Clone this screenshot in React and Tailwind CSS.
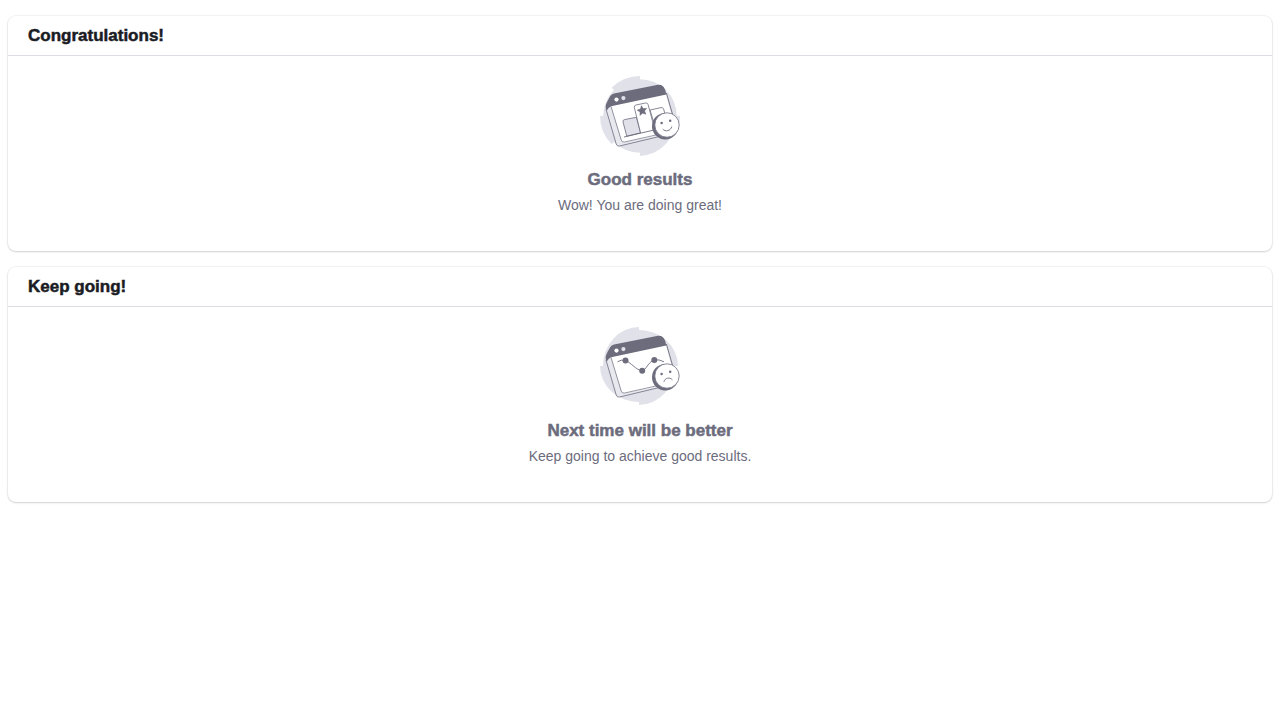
function BrowserFrame() {
  return (
    <>
      <path d="M6 33 L16.2 68 Q17 70.6 19.6 70 L58 60.8 L70 41 L66 17 Z" fill="#e8e8ef" />
      <path d="M6 33 L16.2 68 Q17 70.6 19.6 70 L58 60.8" fill="none" stroke="#6c6c7d" strokeWidth="0.8" />
      <path d="M11 30 L65.8 18 L72.5 42 L56 60 L24.5 66.2 Q22.3 66.6 21.6 64.4 Z" fill="#fff" />
      <path d="M11 30.4 L21.2 64 Q22 66.6 24.6 66 L56 59" fill="none" stroke="#6c6c7d" strokeWidth="0.7" />
      <path d="M66.4 17 L73 40" fill="none" stroke="#6c6c7d" strokeWidth="0.9" />
      <path d="M6.8 34.5 C4.8 31 5.8 28.3 7.4 25.2 L10.3 20 Q11.5 18 14 17.4 L58 8.8 Q65 8 66.3 18.5 L11 30.2 Q8.7 31 6.8 34.5 Z" fill="#6c6c7d" />
      <circle cx="16.5" cy="23.6" r="2.1" fill="#fff" />
      <circle cx="23.4" cy="22.1" r="2.1" fill="#e1e1ea" />
    </>
  );
}

function Face({ mouth }) {
  return (
    <>
      <circle cx="65.2" cy="50.2" r="13.2" fill="#6c6c7d" />
      <circle cx="67" cy="49" r="12.2" fill="#fff" stroke="#6c6c7d" strokeWidth="0.8" />
      <circle cx="61.6" cy="47" r="1.25" fill="#6c6c7d" />
      <circle cx="70.2" cy="44.7" r="1.25" fill="#6c6c7d" />
      <path d={mouth} fill="none" stroke="#6c6c7d" strokeWidth="0.9" strokeLinecap="round" />
    </>
  );
}

function GoodResultsArt() {
  return (
    <svg viewBox="0 0 80 80" className="size-20" aria-hidden="true">
      <circle cx="40" cy="40" r="36.8" fill="#e1e1ea" />
      <path
        d="M40 40 V0 A40 40 0 0 0 11.7 11.7 Z M40 40 H0 A40 40 0 0 0 11.7 68.3 Z M40 80 A38 40 0 0 0 76.8 40 H40 Z M40 40 H80 A40 40 0 0 1 79 49 Z"
        fill="#e1e1ea"
      />
      <BrowserFrame />
      <path d="M50 34 L61 31.6 Q63 31.2 63.6 33 L65 38 L57 57 Z" fill="#fff" stroke="#6c6c7d" strokeWidth="0.8" />
      <path d="M26.8 60.2 L23 46 Q22.6 44 24.5 43.6 L36.4 41.3 L40.6 56.8 Z" fill="#e1e1ea" stroke="#6c6c7d" strokeWidth="0.8" />
      <path d="M40.6 57 L34.3 31.5 Q33.9 29.5 36 29 L45.5 27 Q47.5 26.6 48.1 28.6 L54.8 53.7" fill="#fff" stroke="#6c6c7d" strokeWidth="0.8" />
      <path d="M24 61 L55 53.8" fill="none" stroke="#6c6c7d" strokeWidth="0.9" />
      <path d="M41.4 29.6 L43.2 32.6 L46.7 32.3 L44.6 35 L46 38.3 L42.6 37.2 L39.9 39.5 L40 36 L37.1 34.1 L40.4 33.1 Z" fill="#6c6c7d" stroke="#6c6c7d" strokeWidth="0.4" />
      <Face mouth="M63 53.4 C65.2 56.2 70.8 55 71.7 50.9" />
    </svg>
  );
}

function NextTimeArt() {
  return (
    <svg viewBox="0 0 80 80" className="size-20" aria-hidden="true">
      <path
        d="M39 39 V0 A36 39 0 0 0 3 39 Z M39 39 H0 A39 36 0 0 0 39 75 Z M39 39 V78 A36 39 0 0 0 75 39 Z M39 39 H78 A39 36 0 0 0 39 3 Z"
        fill="#e1e1ea"
      />
      <circle cx="39" cy="39" r="35.8" fill="#e1e1ea" />
      <BrowserFrame />
      <path d="M17.5 34.8 Q21 32.2 25.5 33.5 C31 35.5 36 43 42 43.8 C46 43.5 48 35 54.2 33 Q59 32 64 34.8" fill="none" stroke="#6c6c7d" strokeWidth="0.9" />
      <circle cx="25.5" cy="33.5" r="3" fill="#6c6c7d" />
      <circle cx="42.2" cy="43.8" r="3" fill="#6c6c7d" />
      <circle cx="54.3" cy="33" r="3" fill="#6c6c7d" />
      <Face mouth="M64 54.5 C64.8 50.8 70 49.8 72.2 52.6" />
    </svg>
  );
}

function Card({ title, art, heading, text }) {
  return (
    <section className="rounded-lg bg-white pb-9 shadow-[0_0_1px_1px_rgba(26,28,36,0.05),0_1px_2px_rgba(26,28,36,0.16)]">
      <header className="border-b border-[#dcdce4] px-5 py-2">
        <h2 className="text-[17px] leading-[23px] font-bold text-[#1a1c24] [-webkit-text-stroke:0.5px]">{title}</h2>
      </header>
      <div className="flex flex-col items-center pt-5 text-center text-[#6c6c7d]">
        {art}
        <h3 className="mt-3 text-[17px] leading-[23px] font-bold [-webkit-text-stroke:0.5px]">{heading}</h3>
        <p className="mt-1 text-sm leading-5">{text}</p>
      </div>
    </section>
  );
}

export default function App() {
  return (
    <main className="flex flex-col gap-4 px-2 py-4 font-['Liberation_Sans',Arial,sans-serif]">
      <Card title="Congratulations!" art={<GoodResultsArt />} heading="Good results" text="Wow! You are doing great!" />
      <Card title="Keep going!" art={<NextTimeArt />} heading="Next time will be better" text="Keep going to achieve good results." />
    </main>
  );
}
